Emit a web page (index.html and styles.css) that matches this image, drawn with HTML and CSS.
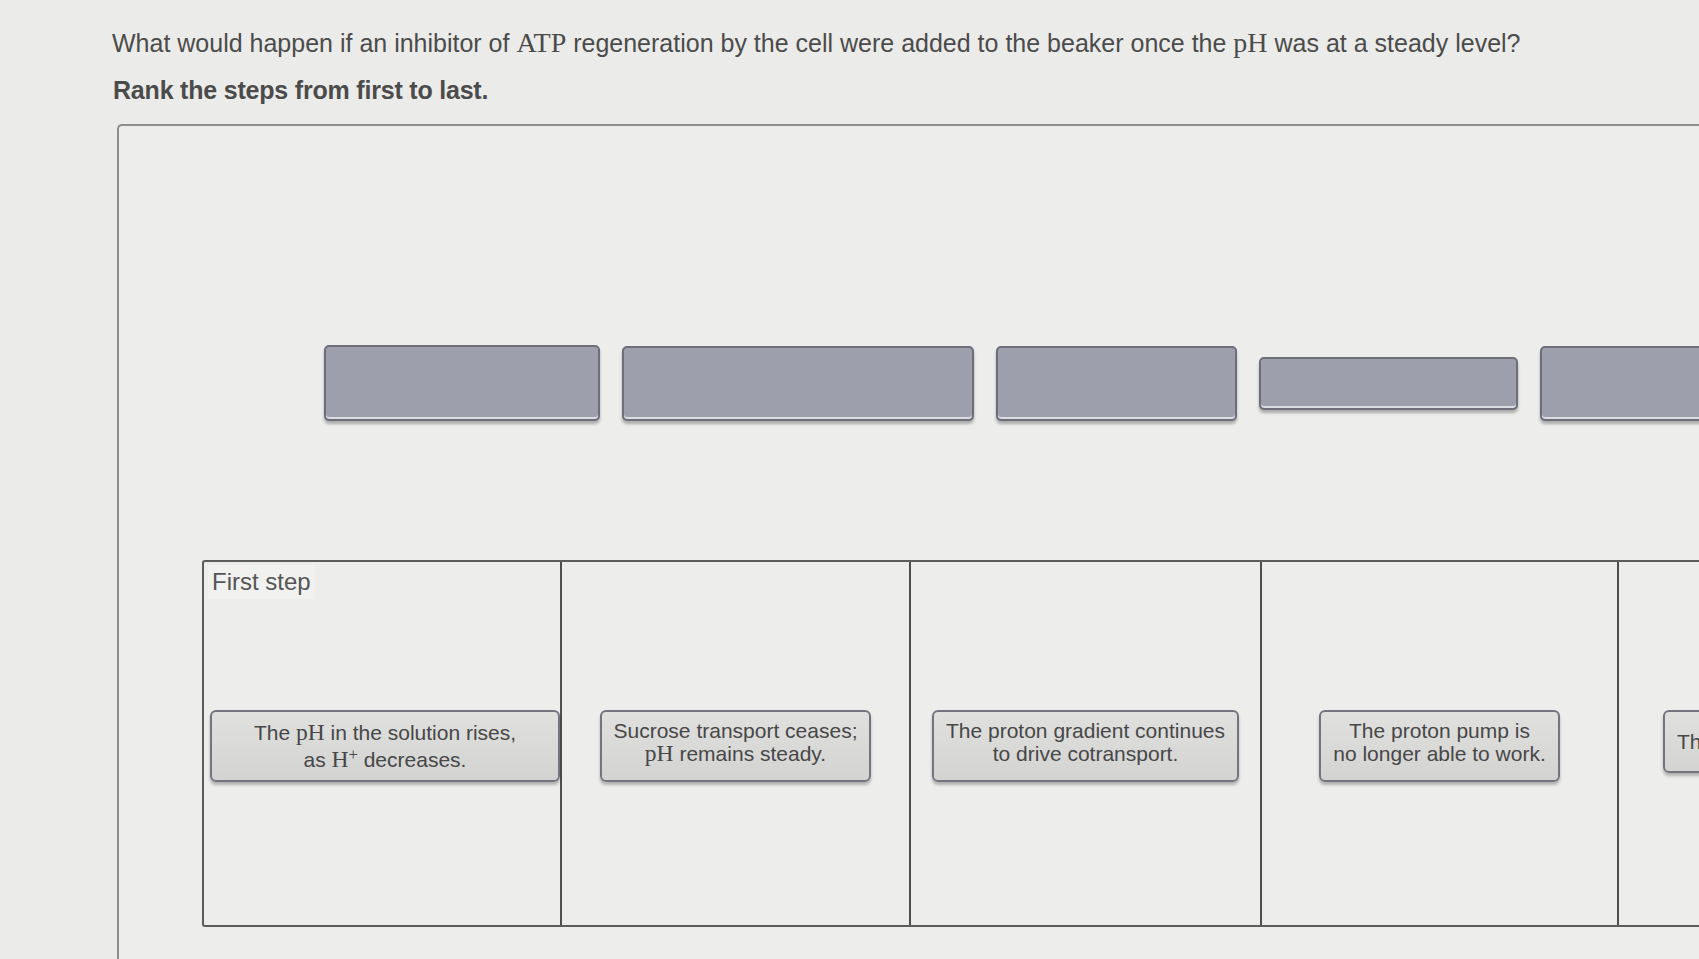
FILE: index.html
```html
<!DOCTYPE html>
<html>
<head>
  <title>Rank the steps</title>
  <link rel="stylesheet" href="styles.css">
</head>
<body>
  <div class="page">
    <p class="question">What would happen if an inhibitor of <span class="math">ATP</span> regeneration by the cell were added to the beaker once the <span class="math">pH</span> was at a steady level?</p>
    <p class="instruction">Rank the steps from first to last.</p>

    <div class="sort-area">
      <!-- empty drop slots -->
      <div class="slot-row">
        <div class="slot" style="width: 276px; height: 76px;"></div>
        <div class="slot" style="width: 352px; height: 75px;"></div>
        <div class="slot" style="width: 241px; height: 75px;"></div>
        <div class="slot" style="width: 259px; height: 53px;"></div>
        <div class="slot" style="width: 240px; height: 75px;"></div>
      </div>

      <!-- ranking columns -->
      <div class="rank-table">
        <div class="rank-cell">
          <span class="rank-label">First step</span>
          <div class="card wide">The <span class="math">pH</span> in the solution rises,<br>as <span class="math">H<sup>+</sup></span> decreases.</div>
        </div>
        <div class="rank-cell">
          <div class="card">Sucrose transport ceases;<br><span class="math">pH</span> remains steady.</div>
        </div>
        <div class="rank-cell">
          <div class="card">The proton gradient continues<br>to drive cotransport.</div>
        </div>
        <div class="rank-cell">
          <div class="card">The proton pump is<br>no longer able to work.</div>
        </div>
        <div class="rank-cell last">
          <div class="card short">The</div>
        </div>
      </div>
    </div>
  </div>
</body>
</html>
```

FILE: styles.css
```css
html, body {
  margin: 0;
  padding: 0;
  overflow: hidden;
}

body {
  font-family: "Liberation Sans", Arial, sans-serif;
  background-color: #ebebe9;
  color: #4b4b4b;
  height: 959px;
}

.page {
  padding: 27px 0 0 112px;
}

.math {
  font-family: "Liberation Serif", "DejaVu Serif", serif;
  font-size: 1.12em;
}

.math sup {
  font-size: 0.7em;
  vertical-align: 0.45em;
  line-height: 0;
}

.question {
  margin: 0;
  font-size: 25px;
  line-height: 32px;
}

.instruction {
  margin: 17px 0 0 1px;
  font-size: 25px;
  font-weight: bold;
  line-height: 28px;
  letter-spacing: -0.2px;
}

.sort-area {
  margin: 20px 0 0 5px;
  width: 1700px;
  height: 900px;
  border: 2px solid #8e8e8e;
  border-right: none;
  border-radius: 5px 0 0 0;
  background-color: #edeeec;
}

.slot-row {
  display: flex;
  align-items: center;
  gap: 22px;
  margin: 218px 0 0 205px;
  height: 78px;
}

.slot {
  flex: none;
  box-sizing: border-box;
  background-color: #9e9fac;
  border: 2px solid #6d6e7a;
  border-radius: 5px;
  box-shadow: inset 0 -2px 0 #dcdde4, 0 3px 3px rgba(0, 0, 0, 0.28);
}

.rank-table {
  display: grid;
  grid-template-columns: 358px 349px 351px 357px 300px;
  margin: 138px 0 0 83px;
  height: 363px;
  border: 2px solid #5c5c5c;
  border-right: none;
  border-radius: 3px 0 0 3px;
}

.rank-cell {
  position: relative;
  display: flex;
  justify-content: center;
  align-items: flex-start;
  padding-top: 148px;
  border-right: 2px solid #4f4f4f;
}

.rank-cell.last {
  justify-content: flex-start;
  padding-left: 44px;
  border-right: none;
}

.rank-label {
  position: absolute;
  top: 3px;
  left: 4px;
  padding: 2px 4px;
  background-color: #f1f1f0;
  font-size: 24px;
  line-height: 30px;
  color: #555;
}

.card {
  box-sizing: border-box;
  min-height: 72px;
  padding: 7px 12px;
  background: linear-gradient(#e0e0df, #d3d3d2);
  border: 2px solid #74747e;
  border-radius: 6px;
  box-shadow: 0 3px 3px rgba(0, 0, 0, 0.25);
  font-size: 21px;
  line-height: 23px;
  text-align: center;
  color: #474747;
}

.card.wide {
  width: 352px;
  margin-left: 6px;
  padding-top: 7px;
  line-height: 27px;
}

.card.short {
  min-height: 63px;
  padding-top: 18px;
}
```
